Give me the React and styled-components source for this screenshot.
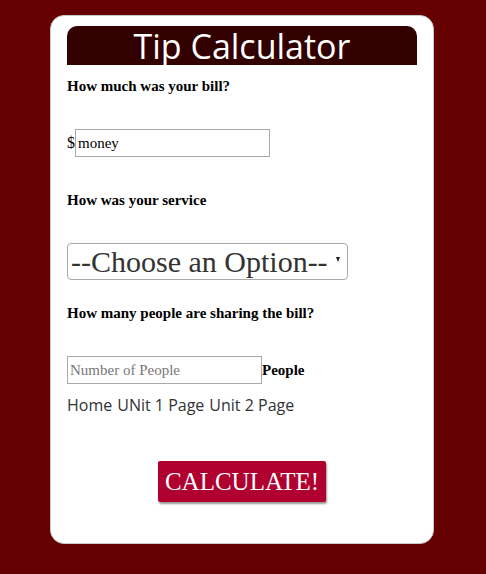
import styled, { createGlobalStyle } from "styled-components";

const GlobalStyle = createGlobalStyle`
  body {
    margin: 0;
    background: #660000;
    font-family: "Liberation Serif", "Times New Roman", serif;
  }
`;

const Card = styled.div`
  box-sizing: border-box;
  width: 384px;
  height: 529px;
  margin: 15px 0 0 50px;
  padding: 10px 16px 0;
  background: #ffffff;
  border: 1px solid #c8c8c8;
  border-radius: 14px;
`;

const Header = styled.h1`
  margin: 0;
  height: 39px;
  background: #330000;
  border-radius: 10px 10px 0 0;
  color: #ffffff;
  font-family: "Open Sans", "Noto Sans", sans-serif;
  font-weight: 400;
  font-size: 34px;
  line-height: 40px;
  text-align: center;
`;

const Label = styled.p`
  margin: ${(p) => p.$top}px 0 0;
  font-size: 15px;
  font-weight: bold;
  line-height: 18px;
  color: #000;
`;

const Row = styled.div`
  display: flex;
  align-items: center;
  margin-top: ${(p) => p.$top}px;
  font-size: 16px;
`;

const TextInput = styled.input`
  box-sizing: border-box;
  width: 195px;
  height: 28px;
  padding: 0 2px;
  border: 1px solid #a9a9a9;
  font-family: "Liberation Serif", serif;
  font-size: 15px;
  color: #000;
  outline: none;
  &::placeholder {
    color: #777;
  }
`;

const Suffix = styled.span`
  font-weight: bold;
  font-size: 15px;
`;

const Select = styled.div`
  box-sizing: border-box;
  display: flex;
  align-items: center;
  justify-content: space-between;
  width: 281px;
  height: 37px;
  margin-top: 34px;
  padding: 0 7px 0 3px;
  border: 1px solid #a9a9a9;
  border-radius: 4px;
  font-size: 30px;
  color: #333;
  &::after {
    content: "";
    border-left: 2.5px solid transparent;
    border-right: 2.5px solid transparent;
    border-top: 5px solid #222;
    margin-top: -4px;
  }
`;

const Nav = styled.div`
  display: flex;
  gap: 5px;
  margin-top: 10px;
  font-family: "Open Sans", "Noto Sans", sans-serif;
  font-size: 16px;
  color: #333;
`;

const Center = styled.div`
  display: flex;
  justify-content: center;
  margin-top: 45px;
`;

const Button = styled.button`
  height: 41px;
  padding: 0 7px;
  background: #b00030;
  color: #ffffff;
  border: none;
  box-shadow: 1px 2px 2px #999;
  border-radius: 2px;
  font-family: "Liberation Serif", serif;
  font-size: 25px;
`;

export default function App() {
  return (
    <>
      <GlobalStyle />
      <Card>
        <Header>Tip Calculator</Header>
        <Label $top={12}>How much was your bill?</Label>
        <Row $top={34}>
          $<TextInput defaultValue="money" />
        </Row>
        <Label $top={34}>How was your service</Label>
        <Select>--Choose an Option--</Select>
        <Label $top={24}>How many people are sharing the bill?</Label>
        <Row $top={34}>
          <TextInput placeholder="Number of People" />
          <Suffix>People</Suffix>
        </Row>
        <Nav>
          <span>Home</span>
          <span>UNit 1 Page</span>
          <span>Unit 2 Page</span>
        </Nav>
        <Center>
          <Button>CALCULATE!</Button>
        </Center>
      </Card>
    </>
  );
}
